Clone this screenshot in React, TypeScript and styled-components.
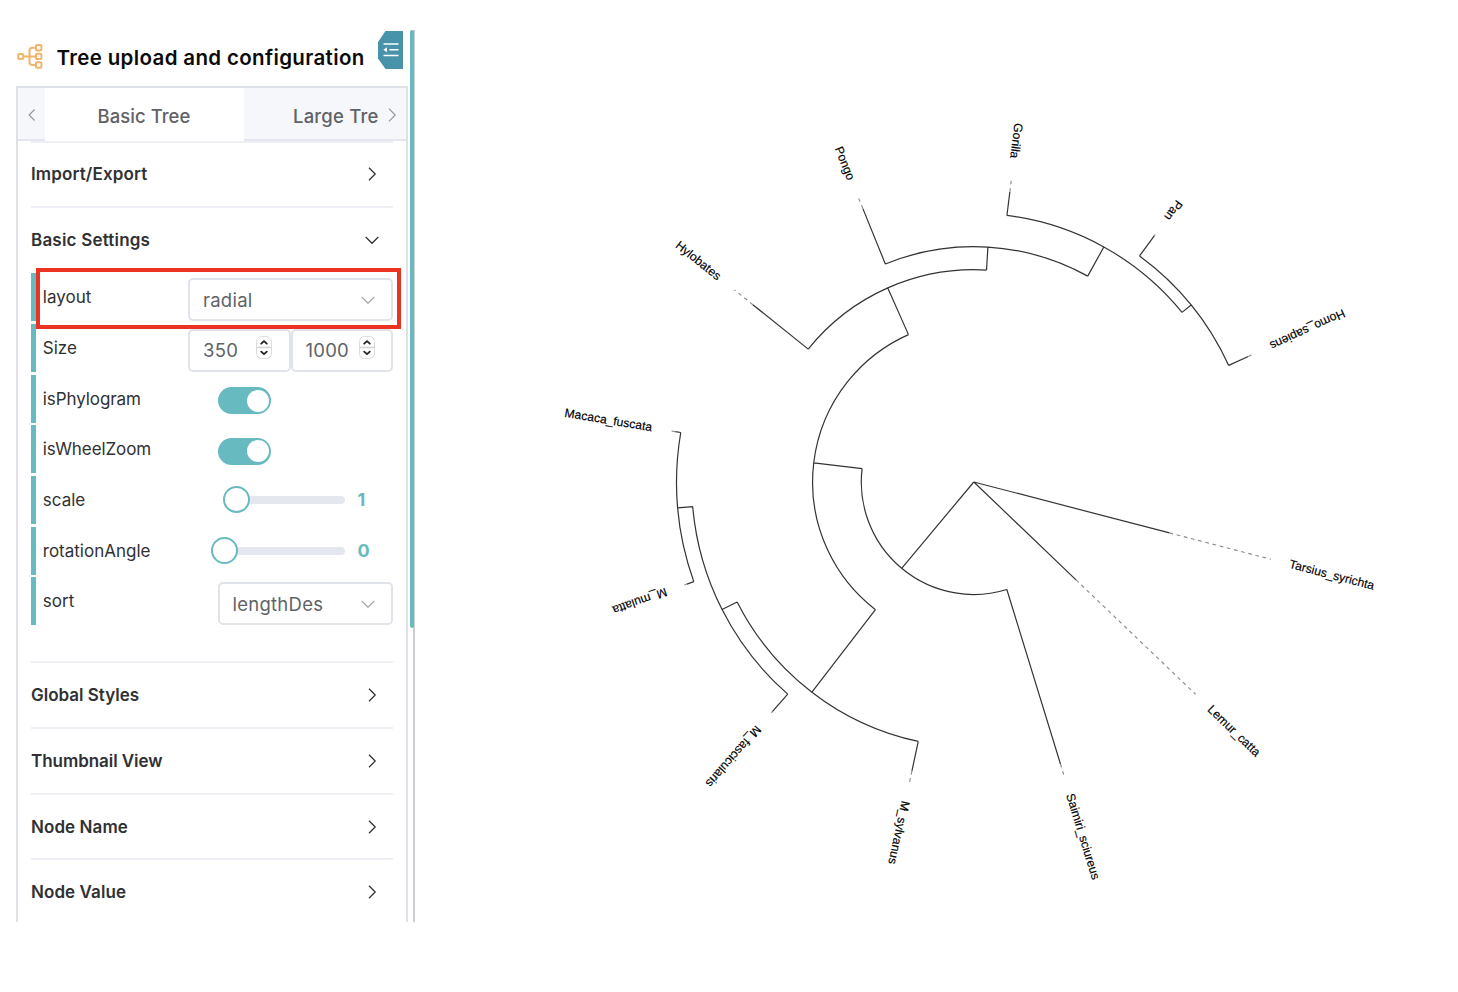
import React from "react";
import styled, { createGlobalStyle } from "styled-components";

const teal = "#67bac0";
const line = "#dfe1e8";

const Global = createGlobalStyle`
  * { box-sizing: border-box; }
  body { margin: 0; background: #fff; font-family: Inter, "Liberation Sans", sans-serif; }
`;

const Page = styled.div`
  display: flex;
  width: 1458px;
  height: 992px;
  overflow: hidden;
  background: #fff;
`;

const Sidebar = styled.aside`
  display: flex;
  flex: none;
  width: 415px;
  height: 892px;
  margin-top: 30px;
  padding-left: 16px;
`;

const SideMain = styled.div`
  display: flex;
  flex-direction: column;
  width: 392px;
`;

const ScrollTrack = styled.div`
  width: 5px;
  margin-left: 2px;
  border-right: 2px solid #cfcfd1;
`;

const ScrollThumb = styled.div`
  width: 4px;
  height: 598px;
  border-radius: 2px;
  background: ${teal};
`;

const Header = styled.header`
  display: flex;
  flex: none;
  height: 57px;
  padding: 1px 5px 0 1px;
`;

const Title = styled.h1`
  margin: 0 0 0 13.5px;
  width: 321.5px;
  padding-top: 11px;
  font-size: 20.5px;
  line-height: 32px;
  font-weight: 600;
  letter-spacing: 0.35px;
  white-space: nowrap;
  color: #0b0b0b;
`;

const TreeIcon = styled.svg`
  flex: none;
  margin-top: 12px;
`;

const Panel = styled.section`
  display: flex;
  flex-direction: column;
  flex: 1;
  min-height: 0;
  margin-top: -1px;
  overflow: hidden;
  border: 2px solid ${line};
  border-bottom: 0;
`;

const TabBar = styled.nav`
  display: flex;
  flex: none;
  height: 53px;
  background: #f5f7fb;
  border-bottom: 2px solid #e4e6ed;
`;

const TabArrow = styled.button`
  display: flex;
  align-items: center;
  justify-content: center;
  width: 27px;
  padding: 3px 0 0;
  border: 0;
  background: none;
`;

const TabWindow = styled.div`
  display: flex;
  width: 333px;
  overflow: hidden;
  margin-bottom: -2px;
`;

const Tab = styled.div<{ $active?: boolean }>`
  flex: none;
  width: 199px;
  height: ${(p) => (p.$active ? 53 : 51)}px;
  padding-left: ${(p) => (p.$active ? 52.5 : 49)}px;
  font-size: 18.5px;
  font-weight: 500;
  line-height: 57px;
  letter-spacing: ${(p) => (p.$active ? 0.05 : 0.2)}px;
  white-space: nowrap;
  color: #606266;
  background: ${(p) => (p.$active ? "#fff" : "transparent")};
`;

const Sections = styled.div`
  display: flex;
  flex-direction: column;
  padding: 0 13px;
`;

const SectionHead = styled.div`
  display: flex;
  flex: none;
  align-items: center;
  justify-content: space-between;
  height: 65.7px;
  padding-right: 12.8px;
  border-top: 2px solid #eeeff6;

  &:first-child {
    height: 64.7px;
    padding-bottom: 1px;
  }
`;

const SectionName = styled.h2<{ $track?: number }>`
  margin: 0;
  font-size: 17px;
  font-weight: 600;
  line-height: 24px;
  letter-spacing: ${(p) => p.$track ?? 0}px;
  color: #303133;
`;

const Rows = styled.div`
  display: flex;
  flex-direction: column;
  gap: 2.67px;
  height: 390px;
  padding-top: 1.9px;
`;

const Row = styled.div`
  display: flex;
  flex: none;
  align-items: center;
  height: 48px;
  border-left: 5px solid ${teal};
`;

const RowLabel = styled.label<{ $track?: number }>`
  flex: none;
  width: 152px;
  padding-left: 6.8px;
  font-size: 17px;
  line-height: 24px;
  letter-spacing: ${(p) => p.$track ?? 0}px;
  color: #303133;
`;

const Field = styled.div<{ $w: number; $left?: number }>`
  display: flex;
  flex: none;
  align-items: center;
  justify-content: space-between;
  width: ${(p) => p.$w}px;
  height: 43px;
  margin: 5px 0 0 ${(p) => p.$left ?? 0}px;
  padding: 0 15px 0 13px;
  border: 2px solid #e0e3ea;
  border-radius: 5px;
  font-size: 18.5px;
  letter-spacing: 0.25px;
  color: #606266;
`;

const FieldGroup = styled.div`
  display: flex;
`;

const Switch = styled.div`
  display: flex;
  justify-content: flex-end;
  width: 53.5px;
  height: 27px;
  margin: 4px 0 0 29.5px;
  padding: 2.5px;
  border-radius: 14px;
  background: ${teal};
`;

const Knob = styled.div`
  width: 22px;
  height: 22px;
  border-radius: 50%;
  background: #fff;
`;

const Slider = styled.div`
  display: flex;
  align-items: center;
  width: 121px;
  height: 8px;
  margin-left: 36px;
  border-radius: 4px;
  background: #e4e7ed;
`;

const Handle = styled.div<{ $at: number }>`
  flex: none;
  width: 27px;
  height: 27px;
  margin-left: ${(p) => p.$at - 13.5}px;
  border: 2px solid ${teal};
  border-radius: 50%;
  background: #fff;
`;

const SliderValue = styled.span`
  margin-left: 12.5px;
  font-size: 18px;
  font-weight: 700;
  color: ${teal};
`;

const Canvas = styled.main`
  flex: 1;
`;

const Highlight = styled.div`
  position: absolute;
  left: 36px;
  top: 268px;
  width: 365px;
  height: 61px;
  border: 4px solid #ea3323;
`;

const Chevron = ({ dir, color, width = 1.25 }: { dir: "left" | "right" | "down"; color: string; width?: number }) => {
  const d = {
    left: "M10.6 3.5 5.1 9l5.5 5.5",
    right: "M5 2.7 11.2 9 5 15.3",
    down: "M1.7 6 8 12.3 14.3 6",
  }[dir];
  return (
    <svg width="16" height="18" viewBox="0 0 16 18" fill="none" stroke={color} strokeWidth={width}>
      <path d={d} />
    </svg>
  );
};

const StepperIcon = styled.svg`
  margin: -5px 1.5px 0 0;
`;

const Stepper = () => (
  <StepperIcon width="16" height="23" viewBox="0 0 16 23" fill="none">
    <rect x="0.5" y="0.5" width="15" height="22" rx="5" fill="#fff" stroke="#dcdcdc" />
    <path d="M0.5 11.5h15" stroke="#d4d4d4" strokeWidth="1.5" />
    <path d="M5.2 7.7 8 5.2l2.8 2.5M5.2 15.7l2.8 2.5 2.8-2.5" stroke="#222" strokeWidth="1.8" strokeLinecap="round" strokeLinejoin="round" />
  </StepperIcon>
);

const Section = ({ name, open, track }: { name: string; open?: boolean; track?: number }) => (
  <SectionHead>
    <SectionName $track={track}>{name}</SectionName>
    <Chevron dir={open ? "down" : "right"} color="#303133" />
  </SectionHead>
);

/* Radial tree geometry: twelve leaves spread over 350 degrees. */
const CX = 973.8 - 415;
const CY = 482;
const TIP = 307;
const LABEL = 326.2;
const step = 350 / 12;
const leafAngle = (i: number) => step * (i + 0.5);

const pt = (r: number, a: number) => {
  const t = (a * Math.PI) / 180;
  return `${(CX + r * Math.cos(t)).toFixed(2)} ${(CY + r * Math.sin(t)).toFixed(2)}`;
};

type Node = { name?: string; r: number; kids?: Node[] };

const tree: Node = {
  r: 0,
  kids: [
    { name: "Tarsius_syrichta", r: 202.2 },
    { name: "Lemur_catta", r: 141.5 },
    {
      r: 112.5,
      kids: [
        { name: "Saimiri_sciureus", r: 295 },
        {
          r: 161.2,
          kids: [
            {
              r: 265.3,
              kids: [
                { name: "M_sylvanus", r: 295.5 },
                {
                  r: 282.2,
                  kids: [
                    { name: "M_fascicularis", r: 305.5 },
                    { r: 297.2, kids: [{ name: "M_mulatta", r: 304.5 }, { name: "Macaca_fuscata", r: 302.8 }] },
                  ],
                },
              ],
            },
            {
              r: 212.3,
              kids: [
                { name: "Hylobates", r: 283.3 },
                {
                  r: 235.3,
                  kids: [
                    { name: "Pongo", r: 295 },
                    {
                      r: 268.6,
                      kids: [
                        { name: "Gorilla", r: 292.5 },
                        { r: 280.3, kids: [{ name: "Pan", r: 305.5 }, { name: "Homo_sapiens", r: 301.8 }] },
                      ],
                    },
                  ],
                },
              ],
            },
          ],
        },
      ],
    },
  ],
};

const branches: string[] = [];
const leaves: { name: string; a: number; r: number }[] = [];

const place = (node: Node): number => {
  if (!node.kids) {
    const a = leafAngle(leaves.length);
    leaves.push({ name: node.name!, a, r: node.r });
    return a;
  }
  const angles = node.kids.map(place);
  const first = angles[0];
  const last = angles[angles.length - 1];
  node.kids.forEach((kid, i) => branches.push(`M${pt(node.r, angles[i])}L${pt(kid.r, angles[i])}`));
  if (node.r > 0) {
    branches.push(`M${pt(node.r, first)}A${node.r} ${node.r} 0 0 1 ${pt(node.r, last)}`);
  }
  return (first + last) / 2;
};
place(tree);

const Tree = () => (
  <svg width="1043" height="992" viewBox="0 0 1043 992" fill="none">
    <path d={branches.join("")} stroke="#333" strokeWidth="1.2" strokeLinejoin="round" />
    {leaves.map(({ name, a, r }) => {
      const flip = a > 180;
      return (
        <g key={name}>
          <path d={`M${pt(r, a)}L${pt(TIP, a)}`} stroke="#8c8c8c" strokeWidth="1.15" strokeDasharray="3.7 3.7" />
          <text
            transform={`translate(${pt(LABEL, a)}) rotate(${flip ? a + 180 : a})`}
            dy="0.31em"
            textAnchor={flip ? "end" : "start"}
            fontFamily="'Liberation Sans', Arial, sans-serif"
            fontSize="12.2"
            fill="#000"
            stroke="#000"
            strokeWidth="0.15"
          >
            {name}
          </text>
        </g>
      );
    })}
  </svg>
);

export default function App() {
  return (
    <Page>
      <Global />
      <Sidebar>
        <SideMain>
          <Header>
            <TreeIcon width="26" height="27" viewBox="0 0 26 27" fill="none" stroke="#f4b36b" strokeWidth="2">
              <rect x="1.2" y="10.9" width="5" height="5" rx="1" />
              <rect x="19" y="2" width="5.4" height="5.4" rx="1" />
              <rect x="19" y="10.7" width="5.4" height="5.4" rx="1" />
              <rect x="19" y="19.3" width="5.4" height="5.4" rx="1" />
              <path d="M6.2 13.4H19M19 4.7h-3.5a3 3 0 0 0-3 3v11.4a3 3 0 0 0 3 3H19" />
            </TreeIcon>
            <Title>Tree upload and configuration</Title>
            <svg width="25" height="38" viewBox="0 0 25 38">
              <path d="M7.5 0H25V38H7.5L0 27.5V11Z" fill="#4892aa" />
              <path d="M5.5 13h15M11.5 18.7h9M5.5 24.4h15" stroke="#fff" strokeWidth="1.5" />
              <path d="M5.3 18.7 9 16.2v5Z" fill="#fff" />
            </svg>
          </Header>
          <Panel>
            <TabBar>
              <TabArrow><Chevron dir="left" color="#909399" width={1.1} /></TabArrow>
              <TabWindow>
                <Tab $active>Basic Tree</Tab>
                <Tab>Large Tree</Tab>
              </TabWindow>
              <TabArrow><Chevron dir="right" color="#909399" width={1.1} /></TabArrow>
            </TabBar>
            <Sections>
              <Section name="Import/Export" track={0.14} />
              <Section name="Basic Settings" track={0.2} open />
              <Rows>
                <Row><RowLabel>layout</RowLabel><Field $w={205}>radial<Chevron dir="down" color="#a8abb2" /></Field></Row>
                <Row>
                  <RowLabel>Size</RowLabel>
                  <FieldGroup>
                    <Field $w={102.5}>350<Stepper /></Field>
                    <Field $w={102.5}>1000<Stepper /></Field>
                  </FieldGroup>
                </Row>
                <Row><RowLabel $track={-0.08}>isPhylogram</RowLabel><Switch><Knob /></Switch></Row>
                <Row><RowLabel $track={-0.08}>isWheelZoom</RowLabel><Switch><Knob /></Switch></Row>
                <Row><RowLabel>scale</RowLabel><Slider><Handle $at={12.7} /></Slider><SliderValue>1</SliderValue></Row>
                <Row><RowLabel>rotationAngle</RowLabel><Slider><Handle $at={0.3} /></Slider><SliderValue>0</SliderValue></Row>
                <Row><RowLabel>sort</RowLabel><Field $w={175.5} $left={29.5}>lengthDes<Chevron dir="down" color="#a8abb2" /></Field></Row>
              </Rows>
              <Section name="Global Styles" />
              <Section name="Thumbnail View" track={-0.05} />
              <Section name="Node Name" track={0.08} />
              <Section name="Node Value" track={0.08} />
            </Sections>
          </Panel>
        </SideMain>
        <ScrollTrack><ScrollThumb /></ScrollTrack>
      </Sidebar>
      <Canvas><Tree /></Canvas>
      <Highlight />
    </Page>
  );
}
